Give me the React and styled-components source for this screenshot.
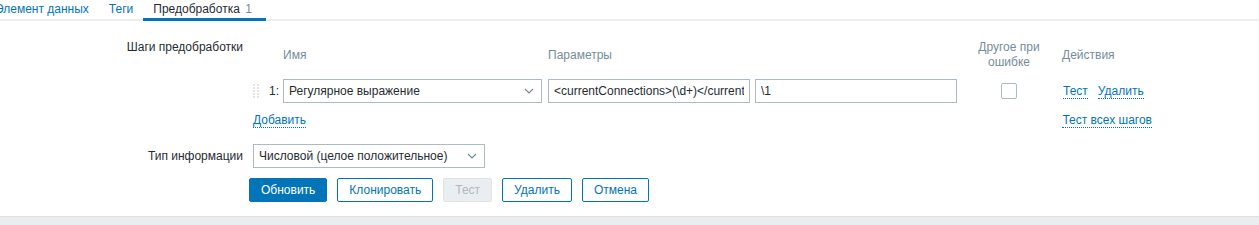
import React from "react";
import styled, { createGlobalStyle } from "styled-components";

const GlobalStyle = createGlobalStyle`
  html, body {
    margin: 0;
    padding: 0;
    background: #fff;
  }
  body {
    font-family: "Liberation Sans", Arial, sans-serif;
    font-size: 12px;
    color: #1f2c33;
    overflow: hidden;
  }
`;

const steps = [
  {
    num: "1:",
    type: "Регулярное выражение",
    params: ["<currentConnections>(\\d+)</currentConnections>", "\\1"],
  },
];

const buttons = [
  { label: "Обновить", kind: "primary" },
  { label: "Клонировать" },
  { label: "Тест", kind: "disabled" },
  { label: "Удалить" },
  { label: "Отмена" },
];

const Chevron = () => (
  <svg width="10" height="6" viewBox="0 0 10 6">
    <polyline
      points="1,1 5,5 9,1"
      fill="none"
      stroke="#768d99"
      strokeWidth="1.2"
    />
  </svg>
);

const DragHandle = () => (
  <svg width="7" height="16" viewBox="0 0 7 16">
    {[0, 3, 6, 9, 12].map((y) =>
      [0, 4].map((x) => (
        <rect key={`${x}-${y}`} x={x} y={y + 1} width="2" height="2" fill="#dfe4e7" />
      ))
    )}
  </svg>
);

const App = () => {
  return (
    <>
      <GlobalStyle />
      <Page>
        <Tabs>
          <Tab>Элемент данных</Tab>
          <Tab>Теги</Tab>
          <Tab $active>
            Предобработка <Count>1</Count>
          </Tab>
        </Tabs>

        <Form>
          <Label>Шаги предобработки</Label>
          <StepsTable>
            <HeaderRow>
              <span />
              <span />
              <HeadCell>Имя</HeadCell>
              <HeadCell>Параметры</HeadCell>
              <HeadCell $center>
                Другое при
                <br />
                ошибке
              </HeadCell>
              <HeadCell $pad>Действия</HeadCell>
            </HeaderRow>

            {steps.map((step) => (
              <StepRow key={step.num}>
                <HandleCell>
                  <DragHandle />
                </HandleCell>
                <NumCell>{step.num}</NumCell>
                <div>
                  <Select $width={259}>
                    <span>{step.type}</span>
                    <Chevron />
                  </Select>
                </div>
                <Params>
                  {step.params.map((p, i) => (
                    <TextInput key={i} readOnly value={p} />
                  ))}
                </Params>
                <CheckCell>
                  <Checkbox />
                </CheckCell>
                <Actions>
                  <Link>Тест</Link>
                  <Link>Удалить</Link>
                </Actions>
              </StepRow>
            ))}

            <FooterRow>
              <Link>Добавить</Link>
              <Link>Тест всех шагов</Link>
            </FooterRow>
          </StepsTable>

          <Label $tall>Тип информации</Label>
          <div>
            <Select $width={232}>
              <span>Числовой (целое положительное)</span>
              <Chevron />
            </Select>
          </div>

          <span />
          <ButtonRow>
            {buttons.map((b) => (
              <Button key={b.label} $kind={b.kind}>
                {b.label}
              </Button>
            ))}
          </ButtonRow>
        </Form>

        <Bottom />
      </Page>
    </>
  );
};

export default App;

const Page = styled.div`
  width: 1259px;
  height: 225px;
  display: flex;
  flex-direction: column;
`;

const Tabs = styled.ul`
  display: flex;
  margin: 0 0 0 -15px;
  padding: 0;
  list-style: none;
  border-bottom: 2px solid #ebeef0;
`;

const Tab = styled.li`
  padding: ${(p) => (p.$active ? "0 14px 0 10px" : "0 10px")};
  margin-bottom: -2px;
  line-height: 18px;
  white-space: nowrap;
  border-bottom: 3px solid ${(p) => (p.$active ? "#0275b8" : "transparent")};
  color: ${(p) => (p.$active ? "#1f2c33" : "#0275b8")};
`;

const Count = styled.span`
  margin-left: 2px;
  color: #768d99;
`;

const Form = styled.div`
  display: grid;
  grid-template-columns: 243px 1fr;
  column-gap: 10px;
  row-gap: 10px;
  padding-top: 19px;
`;

const Label = styled.div`
  text-align: right;
  line-height: ${(p) => (p.$tall ? "24px" : "15px")};
`;

const StepsTable = styled.div`
  display: flex;
  flex-direction: column;
  padding-bottom: 5px;
`;

const rowColumns = "12px 18px 265px 422px 78px 1fr";

const HeaderRow = styled.div`
  display: grid;
  grid-template-columns: ${rowColumns};
  align-items: center;
  height: 30px;
  color: #768d99;
  line-height: 15px;
`;

const HeadCell = styled.div`
  text-align: ${(p) => (p.$center ? "center" : "left")};
  padding-left: ${(p) => (p.$pad ? "14px" : "0")};
`;

const StepRow = styled.div`
  display: grid;
  grid-template-columns: ${rowColumns};
  align-items: center;
  height: 24px;
  margin-top: 9px;
`;

const HandleCell = styled.div`
  display: flex;
  align-items: center;
`;

const NumCell = styled.div`
  text-align: right;
  padding-right: 4px;
`;

const Select = styled.div`
  box-sizing: border-box;
  width: ${(p) => p.$width}px;
  height: 24px;
  display: flex;
  align-items: center;
  justify-content: space-between;
  padding: 0 7px 0 5px;
  border: 1px solid #acbbc2;
  background: #fff;
  white-space: nowrap;
`;

const Params = styled.div`
  display: flex;
  gap: 5px;
`;

const TextInput = styled.input`
  box-sizing: border-box;
  width: 202px;
  height: 24px;
  margin: 0;
  padding: 0 5px;
  border: 1px solid #acbbc2;
  border-radius: 0;
  font-family: inherit;
  font-size: 12px;
  color: #1f2c33;
  outline: none;
`;

const CheckCell = styled.div`
  display: flex;
  justify-content: center;
`;

const Checkbox = styled.span`
  box-sizing: border-box;
  width: 16px;
  height: 16px;
  border: 1px solid #acbbc2;
  border-radius: 2px;
  background: #fff;
`;

const Actions = styled.div`
  display: flex;
  gap: 10px;
  padding-left: 15px;
`;

const Link = styled.span`
  color: #0275b8;
  border-bottom: 1px dotted #0275b8;
  line-height: 14px;
  cursor: pointer;
`;

const FooterRow = styled.div`
  display: flex;
  justify-content: space-between;
  width: 899px;
  margin-top: 8px;
  line-height: 18px;
  align-items: center;
  height: 18px;
`;

const ButtonRow = styled.div`
  display: flex;
  gap: 10px;
  margin-left: -4px;
`;

const Button = styled.button`
  box-sizing: border-box;
  height: 24px;
  padding: 0 11px;
  border-radius: 2px;
  font-family: inherit;
  font-size: 12px;
  border: 1px solid
    ${(p) =>
      p.$kind === "disabled" ? "#dfe4e7" : "#0275b8"};
  background: ${(p) =>
    p.$kind === "primary"
      ? "#0275b8"
      : p.$kind === "disabled"
      ? "#ebeef0"
      : "#fff"};
  color: ${(p) =>
    p.$kind === "primary"
      ? "#fff"
      : p.$kind === "disabled"
      ? "#acbbc2"
      : "#0275b8"};
`;

const Bottom = styled.div`
  margin-top: 14px;
  flex: 1;
  background: #ebeef0;
  border-top: 1px solid #dde3e7;
`;
